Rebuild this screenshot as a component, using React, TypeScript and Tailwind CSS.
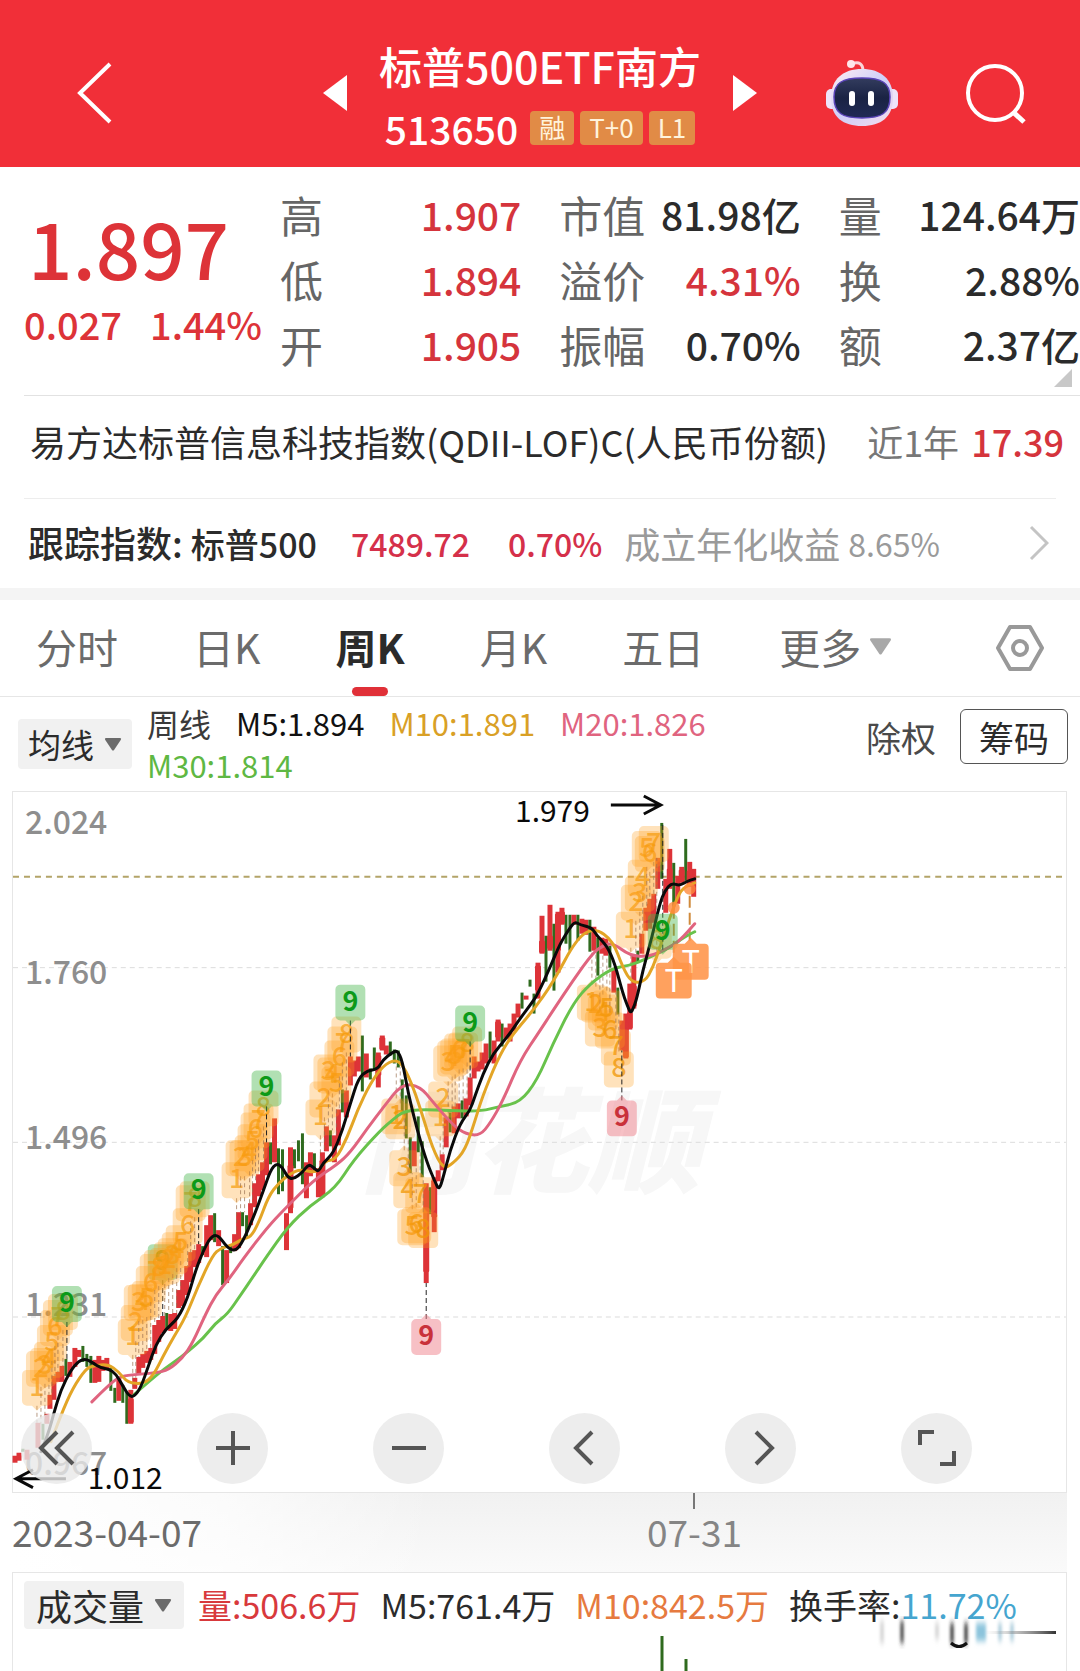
import type { ReactNode } from 'react'

type Candle = [x: number, top: number, bottom: number, color: 'r' | 'g']
type Mark = [x: number, y: number, label: number]

const RED = '#dd3338'
const GREEN = '#2f6b1e'

const quotes = [
	[
		{ label: '高', value: '1.907', up: true },
		{ label: '低', value: '1.894', up: true },
		{ label: '开', value: '1.905', up: true },
	],
	[
		{ label: '市值', value: '81.98亿', up: false },
		{ label: '溢价', value: '4.31%', up: true },
		{ label: '振幅', value: '0.70%', up: false },
	],
	[
		{ label: '量', value: '124.64万', up: false },
		{ label: '换', value: '2.88%', up: false },
		{ label: '额', value: '2.37亿', up: false },
	],
]

const tabs = ['分时', '日K', '周K', '月K', '五日']

const gridLines = [
	{ label: '2.024', textY: 833, lineY: 0 },
	{ label: '1.760', textY: 983, lineY: 967 },
	{ label: '1.496', textY: 1149, lineY: 1142 },
	{ label: '1.231', textY: 1316, lineY: 1317 },
	{ label: '0.967', textY: 1475, lineY: 0 },
]

const candles: Candle[] = [
	[14, 1456, 1463, 'r'], [18, 1453, 1461, 'r'], [22, 1449, 1452, 'g'], [26, 1450, 1460, 'r'], [37, 1423, 1448, 'r'],
	[42, 1424, 1440, 'g'], [46, 1414, 1424, 'r'], [49, 1395, 1409, 'r'], [53, 1376, 1400, 'r'], [57, 1372, 1382, 'r'],
	[61, 1366, 1382, 'r'], [65, 1359, 1376, 'g'], [69, 1362, 1377, 'r'], [74, 1348, 1367, 'r'], [78, 1350, 1357, 'r'],
	[82, 1346, 1362, 'g'], [86, 1354, 1367, 'g'], [90, 1356, 1383, 'g'], [94, 1360, 1383, 'r'], [98, 1356, 1382, 'r'],
	[102, 1360, 1371, 'r'], [106, 1358, 1370, 'r'], [110, 1368, 1391, 'g'], [114, 1388, 1403, 'g'], [118, 1378, 1401, 'r'],
	[122, 1385, 1403, 'g'], [126, 1392, 1424, 'g'], [130, 1390, 1424, 'r'], [134, 1378, 1389, 'r'], [138, 1357, 1375, 'r'],
	[142, 1354, 1368, 'r'], [146, 1351, 1363, 'r'], [150, 1348, 1360, 'r'], [154, 1325, 1354, 'r'], [158, 1320, 1342, 'r'],
	[162, 1316, 1333, 'r'], [166, 1313, 1330, 'g'], [170, 1314, 1331, 'r'], [174, 1313, 1329, 'r'], [178, 1290, 1308, 'r'],
	[182, 1280, 1306, 'r'], [186, 1266, 1295, 'r'], [190, 1252, 1282, 'r'], [194, 1250, 1267, 'r'], [198, 1244, 1263, 'r'],
	[202, 1246, 1255, 'g'], [206, 1225, 1257, 'r'], [210, 1215, 1240, 'r'], [214, 1213, 1242, 'g'], [218, 1230, 1246, 'r'],
	[222, 1246, 1285, 'g'], [226, 1250, 1283, 'r'], [230, 1244, 1253, 'g'], [234, 1234, 1251, 'r'], [238, 1212, 1248, 'r'],
	[242, 1212, 1226, 'g'], [246, 1215, 1236, 'g'], [250, 1203, 1225, 'r'], [254, 1183, 1207, 'r'], [258, 1174, 1196, 'r'],
	[262, 1162, 1190, 'r'], [266, 1142, 1175, 'r'], [270, 1142, 1164, 'g'], [274, 1118, 1162, 'r'], [278, 1148, 1194, 'g'],
	[282, 1149, 1191, 'g'], [286, 1213, 1250, 'r'], [290, 1147, 1213, 'r'], [294, 1149, 1168, 'g'], [298, 1140, 1161, 'g'],
	[302, 1133, 1184, 'g'], [306, 1162, 1198, 'r'], [310, 1152, 1176, 'r'], [314, 1153, 1172, 'g'], [318, 1168, 1197, 'r'],
	[322, 1152, 1197, 'r'], [326, 1126, 1151, 'r'], [330, 1130, 1146, 'g'], [334, 1135, 1162, 'r'], [338, 1109, 1145, 'r'],
	[342, 1089, 1112, 'g'], [346, 1090, 1117, 'r'], [350, 1056, 1085, 'r'], [354, 1060, 1076, 'r'], [358, 1056, 1071, 'r'],
	[362, 1035, 1091, 'g'], [366, 1053, 1077, 'r'], [370, 1068, 1079, 'g'], [374, 1047, 1070, 'g'], [378, 1052, 1087, 'r'],
	[382, 1035, 1050, 'r'], [386, 1045, 1054, 'r'], [390, 1041, 1055, 'g'], [394, 1049, 1063, 'g'], [398, 1050, 1067, 'g'],
	[402, 1079, 1111, 'g'], [406, 1095, 1138, 'g'], [410, 1137, 1173, 'g'], [414, 1141, 1166, 'r'], [418, 1116, 1152, 'g'],
	[422, 1141, 1177, 'g'], [426, 1183, 1283, 'r'], [430, 1187, 1214, 'g'], [434, 1177, 1232, 'r'], [438, 1170, 1181, 'r'],
	[442, 1154, 1170, 'r'], [446, 1117, 1147, 'r'], [450, 1112, 1132, 'g'], [454, 1106, 1133, 'r'], [458, 1103, 1118, 'r'],
	[462, 1100, 1118, 'g'], [466, 1098, 1116, 'r'], [470, 1077, 1105, 'r'], [474, 1056, 1078, 'r'], [478, 1061, 1071, 'r'],
	[482, 1052, 1069, 'r'], [486, 1043, 1063, 'r'], [490, 1031, 1058, 'g'], [494, 1040, 1063, 'r'], [498, 1019, 1041, 'r'],
	[502, 1023, 1046, 'g'], [506, 1027, 1038, 'r'], [510, 1023, 1041, 'r'], [514, 1013, 1031, 'r'], [518, 1003, 1017, 'r'],
	[522, 992, 1008, 'g'], [526, 995, 999, 'r'], [530, 979, 986, 'g'], [534, 993, 1013, 'g'], [538, 962, 998, 'r'],
	[542, 915, 953, 'r'], [546, 935, 981, 'g'], [550, 904, 950, 'r'], [554, 923, 990, 'g'], [558, 911, 972, 'r'],
	[562, 907, 924, 'r'], [566, 914, 943, 'g'], [570, 914, 950, 'g'], [574, 914, 924, 'r'], [578, 914, 940, 'g'],
	[582, 918, 933, 'r'], [586, 919, 934, 'r'], [590, 919, 951, 'g'], [594, 926, 950, 'r'], [598, 937, 975, 'g'],
	[602, 937, 953, 'r'], [606, 938, 955, 'r'], [610, 945, 967, 'g'], [614, 969, 992, 'r'], [618, 987, 1014, 'g'],
	[622, 1020, 1050, 'r'], [626, 1013, 1058, 'r'], [630, 983, 1029, 'r'], [634, 955, 1008, 'r'], [638, 950, 962, 'g'],
	[642, 933, 953, 'r'], [646, 907, 930, 'r'], [650, 898, 928, 'r'], [654, 893, 922, 'r'], [658, 857, 888, 'r'],
	[662, 822, 878, 'g'], [666, 878, 912, 'r'], [670, 848, 888, 'r'], [674, 862, 906, 'g'], [678, 875, 903, 'r'],
	[682, 866, 882, 'r'], [686, 838, 880, 'g'], [690, 861, 886, 'r'], [694, 868, 896, 'r'],
]

// candles whose body is wider than the wick
const bodies: Candle[] = [
	[426, 1190, 1272, 'r'], [434, 1180, 1217, 'r'], [498, 1021, 1037, 'r'], [542, 940, 952, 'r'], [550, 935, 948, 'r'],
	[558, 913, 950, 'r'], [562, 911, 923, 'r'], [538, 965, 990, 'r'], [630, 1012, 1028, 'r'], [634, 985, 1006, 'r'],
	[626, 1022, 1057, 'r'], [650, 903, 922, 'r'], [670, 868, 886, 'r'], [682, 869, 881, 'r'], [690, 870, 884, 'r'],
	[290, 1165, 1208, 'r'], [322, 1160, 1195, 'r'], [382, 1037, 1049, 'r'], [378, 1055, 1075, 'r'], [130, 1399, 1423, 'r'],
]

const upMarks: Mark[] = [
	[36, 1388, 1], [40, 1369, 2], [44, 1366, 3], [48, 1360, 4], [51, 1343, 5], [54, 1328, 6], [57, 1318, 7], [62, 1312, 8],
	[132, 1337, 1], [135, 1323, 2], [138, 1303, 3], [142, 1302, 4], [146, 1299, 5], [150, 1284, 6], [154, 1272, 7], [158, 1268, 8],
	[164, 1266, 1], [168, 1260, 2], [172, 1256, 3], [176, 1250, 4], [180, 1243, 5], [187, 1226, 6], [190, 1203, 7], [194, 1199, 8],
	[236, 1180, 1], [240, 1158, 2], [244, 1158, 3], [249, 1153, 4], [252, 1142, 5], [255, 1130, 6], [258, 1121, 7], [263, 1108, 8],
	[320, 1117, 1], [324, 1099, 2], [328, 1072, 3], [332, 1075, 4], [336, 1084, 5], [339, 1058, 6], [342, 1044, 7], [346, 1034, 8],
	[440, 1118, 1], [443, 1099, 2], [448, 1063, 3], [452, 1058, 4], [455, 1056, 5], [459, 1051, 6], [463, 1050, 7], [467, 1044, 8],
	[631, 929, 1], [636, 902, 2], [640, 893, 3], [643, 877, 4], [647, 848, 5], [650, 853, 6], [654, 843, 7], [657, 940, 8],
]

const downMarks: Mark[] = [
	[396, 1116, 1], [400, 1121, 2], [404, 1168, 3], [408, 1190, 4], [412, 1227, 5], [416, 1225, 6], [420, 1195, 7], [423, 1230, 8],
	[592, 1002, 1], [596, 1004, 2], [600, 1028, 3], [603, 1012, 4], [607, 1008, 5], [610, 1030, 6], [616, 1047, 7], [619, 1069, 8],
]

const tops: Mark[] = [
	[66, 1304, 9], [198, 1191, 9], [266, 1088, 9], [350, 1002, 9], [470, 1023, 9], [663, 931, 9],
]
const buriedTops: Mark[] = [[162, 1262, 9]]
const bottoms: Mark[] = [[426, 1337, 9], [622, 1118, 9]]

const averages = [
	{
		color: '#68c24b',
		points:
			'133,1395 158,1373 175,1361 187,1352 203,1338 215,1323 227,1314 240,1295 253,1276 265,1258 287,1227 310,1205 335,1188 353,1160 380,1130 393,1119 403,1111 420,1109 450,1110 480,1111 500,1106 520,1102 537,1080 553,1043 573,1003 590,983 613,967 630,965 647,958 670,947 685,936 695,931',
	},
	{
		color: '#e0647f',
		points:
			'91,1402 105,1388 118,1377 130,1375 155,1373 168,1370 182,1358 192,1343 205,1314 215,1295 230,1277 243,1258 267,1227 283,1210 313,1180 337,1164 350,1152 367,1128 383,1107 402,1083 420,1086 433,1102 453,1125 466,1134 480,1135 490,1123 503,1100 520,1060 540,1030 553,1010 573,980 593,952 603,945 613,942 630,955 650,956 667,948 680,940 695,923',
	},
	{
		color: '#e3a526',
		points:
			'50,1442 60,1415 72,1388 85,1369 92,1366 107,1364 118,1372 127,1383 143,1384 153,1375 163,1355 173,1337 185,1317 197,1287 212,1255 220,1248 232,1245 243,1238 250,1237 258,1223 268,1196 278,1183 290,1173 300,1169 317,1173 325,1160 335,1160 347,1137 357,1110 370,1083 383,1065 395,1059 403,1065 413,1087 423,1117 432,1147 443,1169 453,1163 465,1150 475,1120 482,1097 497,1060 510,1037 533,1010 553,982 577,937 595,927 613,940 623,967 632,982 645,981 653,967 660,947 668,923 677,898 683,887 695,882',
	},
	{
		color: '#0a0a0a',
		points:
			'40,1452 47,1435 53,1413 60,1390 70,1370 78,1361 85,1359 92,1363 100,1368 108,1369 115,1374 122,1386 128,1396 133,1397 140,1388 148,1365 155,1345 165,1329 177,1319 187,1298 195,1270 203,1250 210,1237 217,1234 227,1248 235,1251 242,1242 253,1217 263,1190 270,1170 276,1163 282,1167 287,1177 293,1179 302,1172 308,1164 313,1167 318,1172 323,1162 333,1153 342,1130 350,1103 358,1078 367,1070 377,1069 383,1059 392,1052 397,1050 402,1060 408,1093 417,1130 427,1163 435,1182 439,1190 443,1177 450,1150 460,1123 470,1110 474,1098 483,1073 493,1053 507,1037 520,1018 532,1002 538,993 550,967 560,943 570,927 575,921 580,924 592,927 597,935 607,945 615,963 623,993 629,1009 631,1012 633,1009 637,998 643,970 652,937 660,903 665,890 672,882 680,885 688,880 695,878',
	},
]

// rounds the corners by curving through the midpoint of each segment
const smooth = (points: string) => {
	const p = points.split(' ').map((pair) => pair.split(',').map(Number))
	const last = p[p.length - 1]
	const curves = p
		.slice(1, -1)
		.map(([x, y], i) => `Q${x} ${y} ${(x + p[i + 2][0]) / 2} ${(y + p[i + 2][1]) / 2}`)
	return `M${p[0][0]} ${p[0][1]}${curves.join('')}L${last[0]} ${last[1]}`
}

// y at which a mark's tether meets its candle
const anchor = (x: number, side: 1 | 2) =>
	candles.reduce((a, b) => (Math.abs(b[0] - x) < Math.abs(a[0] - x) ? b : a))[side]

const flagPath = (x: number, y: number, down?: boolean) =>
	down
		? `M${x - 10} ${y - 18}h5l5 -5l5 5h5a5 5 0 0 1 5 5v26a5 5 0 0 1 -5 5h-20a5 5 0 0 1 -5 -5v-26a5 5 0 0 1 5 -5z`
		: `M${x - 10} ${y - 18}h20a5 5 0 0 1 5 5v26a5 5 0 0 1 -5 5h-5l-5 5l-5 -5h-5a5 5 0 0 1 -5 -5v-26a5 5 0 0 1 5 -5z`

const Marks = ({ marks, down, fill, ink, strong }: {
	marks: Mark[]
	down?: boolean
	fill: string
	ink: string
	strong?: boolean
}) => (
	<>
		{marks.map(([x, y, label]) => (
			<g key={`${x}-${y}`}>
				<line
					x1={x}
					x2={x}
					y1={down ? y - 18 : y + 18}
					y2={anchor(x, down ? 2 : 1)}
					stroke={strong ? '#222' : '#9a7050'}
					strokeOpacity={strong ? 1 : 0.7}
					strokeDasharray={strong ? '5 3' : '4 3'}
				/>
				<path d={flagPath(x, y, down)} fill={fill} />
				<text
					x={x}
					y={y + 8}
					textAnchor="middle"
					fontSize="27"
					fontWeight={strong ? 700 : 500}
					fill={ink}
				>
					{label}
				</text>
			</g>
		))}
	</>
)

const TradeFlag = ({ x, y }: { x: number; y: number }) => (
	<g>
		<path
			d={`M${x - 14} ${y - 18}h8l6 -6l6 6h8a4 4 0 0 1 4 4v28a4 4 0 0 1 -4 4h-28a4 4 0 0 1 -4 -4v-28a4 4 0 0 1 4 -4z`}
			fill="#ff9448"
			fillOpacity="0.88"
		/>
		<text x={x} y={y + 11} textAnchor="middle" fontSize="31" fill="#fff">T</text>
	</g>
)

const KLineChart = () => (
	<svg viewBox="12 791 1055 701" className="block w-full overflow-visible" role="img" aria-label="周K线">
		<text x="360" y="1184" fontSize="114" fontWeight="900" fontStyle="italic" fill="#f7f7f7">同花顺</text>
		{gridLines.map(({ label, textY, lineY }) => (
			<g key={label}>
				{lineY > 0 && <line x1="12" x2="1067" y1={lineY} y2={lineY} stroke="#dcdcdc" strokeDasharray="5 4" />}
				<text x="24" y={textY} fontSize="32" fontWeight="500" fill="#8e8e8e">{label}</text>
			</g>
		))}
		<line x1="12" x2="1067" y1="876" y2="876" stroke="#b3a468" strokeWidth="2" strokeDasharray="6 5" />
		<path d="M674 906V955M690 895V940" stroke="#d08a3c" strokeWidth="2" strokeDasharray="12 5" />
		{candles.map(([x, top, bottom, color]) => (
			<line key={x} x1={x} x2={x} y1={top} y2={bottom} stroke={color === 'r' ? RED : GREEN} strokeWidth={color === 'r' ? 5 : 3} />
		))}
		{bodies.map(([x, top, bottom]) => (
			<rect key={x} x={x - 3} y={top} width="6" height={bottom - top} rx="1" fill={RED} />
		))}
		<Marks marks={buriedTops} strong fill="rgba(70,180,75,0.42)" ink="#4f9a10" />
		<Marks marks={upMarks} fill="rgba(255,160,30,0.3)" ink="rgba(245,155,10,0.7)" />
		<Marks marks={downMarks} down fill="rgba(255,160,30,0.3)" ink="rgba(240,150,5,0.75)" />
		{averages.map(({ color, points }) => (
			<path key={color} d={smooth(points)} fill="none" stroke={color} strokeWidth="3" strokeLinecap="round" />
		))}
		<Marks marks={tops} strong fill="rgba(70,180,75,0.42)" ink="#0c9a18" />
		<Marks marks={bottoms} down strong fill="rgba(240,130,140,0.5)" ink="#c9313a" />
		<TradeFlag x={691} y={961} />
		<TradeFlag x={674} y={980} />
		<circle cx="674" cy="907" r="6" fill="#ff8a3c" fillOpacity="0.8" />
		<circle cx="690" cy="888" r="6" fill="#ff8a3c" fillOpacity="0.8" />
		<g fontSize="30" fill="#0a0a0a">
			<text x="515" y="821">1.979</text>
			<text x="87" y="1489">1.012</text>
		</g>
		<path d="M611 804H661M644 795L661 804L644 813M65 1479H15M32 1470L15 1479L32 1488" fill="none" stroke="#0a0a0a" strokeWidth="3" />
	</svg>
)

const Robot = () => (
	<svg viewBox="0 0 74 68" className="h-[68px] w-[74px]" aria-hidden="true">
		<defs>
			<linearGradient id="shell" x1="0" y1="0" x2="1" y2="1">
				<stop offset="0" stopColor="#ffeef2" />
				<stop offset="0.5" stopColor="#cfcff8" />
				<stop offset="1" stopColor="#f6dcec" />
			</linearGradient>
			<linearGradient id="visor" x1="0" y1="0" x2="0" y2="1">
				<stop offset="0" stopColor="#333c5e" />
				<stop offset="0.5" stopColor="#1a2344" />
				<stop offset="1" stopColor="#202a55" />
			</linearGradient>
		</defs>
		<path d="M27 5C34 2 38 5 38 12" fill="none" stroke="#fbd5da" strokeWidth="3" />
		<circle cx="26" cy="5" r="4" fill="#ffe6ea" />
		<rect x="1" y="30" width="12" height="20" rx="5" fill="#eee4fa" />
		<rect x="61" y="30" width="12" height="20" rx="5" fill="#eee4fa" />
		<path d="M37 10C56 10 68 20 68 39C68 58 56 67 37 67C18 67 6 58 6 39C6 20 18 10 37 10Z" fill="url(#shell)" />
		<path d="M37 19C57 19 65 24 65 38C65 54 57 59 37 59C17 59 9 54 9 38C9 24 17 19 37 19Z" fill="url(#visor)" stroke="#5a44b8" strokeWidth="1.5" />
		<rect x="24" y="32" width="6" height="15" rx="3" fill="#fff" />
		<rect x="43" y="32" width="6" height="15" rx="3" fill="#fff" />
	</svg>
)

const Triangle = ({ className }: { className: string }) => (
	<svg viewBox="0 0 20 16" className={className} aria-hidden="true">
		<path d="M2 1H18Q20 1 19 3L11 15Q10 16 9 15L1 3Q0 1 2 1Z" fill="currentColor" />
	</svg>
)

const Tag = ({ children }: { children: ReactNode }) => (
	<span className="flex h-[34px] items-center rounded-sm bg-[#e18b46] px-[9px] pb-[2px] text-[26px] leading-none text-[#fff3dc]">{children}</span>
)

const Header = () => (
	<header className="grid h-[167px] grid-cols-[1fr_auto_1fr] items-center bg-[#f12f38] pt-[18px] text-white">
		<button type="button" aria-label="返回" className="ml-[76px] w-9">
			<svg viewBox="0 0 36 64" className="h-16 w-9" fill="none" stroke="currentColor" strokeWidth="4">
				<path d="M34 3L4 32L34 61" />
			</svg>
		</button>
		<div className="flex items-center gap-8">
			<button type="button" aria-label="上一只">
				<svg viewBox="0 0 24 36" className="h-9 w-6" fill="currentColor"><path d="M24 0V36L0 18Z" /></svg>
			</button>
			<div className="flex flex-col items-center gap-[11px] pt-2">
				<h1 className="text-[43px] leading-[52px] font-medium">标普500ETF南方</h1>
				<div className="flex items-center gap-[6px]">
					<span className="mr-[6px] text-[39px] leading-[52px] font-medium">513650</span>
					<Tag>融</Tag>
					<Tag>T+0</Tag>
					<Tag>L1</Tag>
				</div>
			</div>
			<button type="button" aria-label="下一只">
				<svg viewBox="0 0 24 36" className="h-9 w-6" fill="currentColor"><path d="M0 0V36L24 18Z" /></svg>
			</button>
		</div>
		<div className="flex items-center justify-end gap-[66px] pr-[53px]">
			<button type="button" aria-label="智能助手"><Robot /></button>
			<button type="button" aria-label="搜索" className="pt-[3px]">
				<svg viewBox="0 0 62 62" className="size-[62px]" fill="none" stroke="currentColor" strokeWidth="4">
					<circle cx="30" cy="30" r="27" />
					<path d="M48 49L59 59" strokeWidth="5" />
				</svg>
			</button>
		</div>
	</header>
)

const Quote = () => (
	<section className="relative ml-6 flex h-[229px] border-b border-[#e2e2e2] pt-[15px]">
		<div className="w-[256px] shrink-0 pt-[18px] text-[#dd3338]">
			<p className="pl-1 text-[78px] leading-[92px] font-medium">1.897</p>
			<p className="flex gap-7 text-[38px] leading-[64px] font-medium whitespace-nowrap">
				<span>0.027</span>
				<span>1.44%</span>
			</p>
		</div>
		<div className="grid flex-1 grid-cols-3 gap-x-[38px]">
			{quotes.map((column) => (
				<dl key={column[0].label}>
					{column.map(({ label, value, up }) => (
						<div key={label} className="flex h-[65px] items-center justify-between whitespace-nowrap">
							<dt className="text-[43px] leading-none text-[#666]">{label}</dt>
							<dd className={up ? 'text-[39px] leading-none font-medium text-[#d5343c]' : 'text-[39px] leading-none font-medium text-[#2b2b2b]'}>
								{value}
							</dd>
						</div>
					))}
				</dl>
			))}
		</div>
		<svg viewBox="0 0 18 18" className="absolute right-2 bottom-2 size-[18px]" aria-hidden="true">
			<path d="M18 0V18H0Z" fill="#c8c8c8" />
		</svg>
	</section>
)

const FundLinks = () => (
	<section className="border-b-[12px] border-[#f4f4f4]">
		<a href="#fund" className="mr-6 ml-6 flex h-[103px] items-center border-b border-[#ededed] pb-3 pl-[6px] text-[36px] leading-none whitespace-nowrap text-[#2b2b2b]">
			易方达标普信息科技指数(QDII-LOF)C(人民币份额)
			<span className="-mr-2 ml-auto text-[#777]">近1年 <span className="ml-1 font-medium text-[#d5343c]">17.39</span></span>
		</a>
		<a href="#index" className="flex h-[89px] items-center pr-[31px] pb-[2px] pl-7 text-[36px] leading-none whitespace-nowrap text-[#9a9a9a]">
			<span className="font-medium text-[#2b2b2b]">跟踪指数: <span className="text-[34px]">标普500</span></span>
			<span className="ml-[34px] text-[32px] font-medium text-[#d5304a]">7489.72</span>
			<span className="mr-[22px] ml-[38px] text-[32px] font-medium text-[#d5304a]">0.70%</span>
			成立年化收益
			<span className="ml-2 text-[32px]">8.65%</span>
			<svg viewBox="0 0 20 36" className="ml-auto h-9 w-5" fill="none" stroke="#c4c4c4" strokeWidth="3">
				<path d="M2 2L18 18L2 34" />
			</svg>
		</a>
	</section>
)

const Tabs = () => (
	<nav className="flex h-[97px] items-center gap-[75px] border-b border-[#e6e6e6] pr-9 pl-9 text-[41px] leading-none whitespace-nowrap text-[#6b6b6b]">
		{tabs.map((tab) =>
			tab === '周K' ? (
				<button key={tab} type="button" aria-current="page" className="relative flex h-full items-center pb-1 font-bold text-[#2b2b2b]">
					{tab}
					<span className="absolute bottom-0 left-1/2 h-[9px] w-9 -translate-x-1/2 rounded-full bg-[#e03038]" />
				</button>
			) : (
				<button key={tab} type="button" className="pb-1">{tab}</button>
			),
		)}
		<button type="button" className="flex items-center gap-2 pb-1">
			更多
			<Triangle className="h-[18px] w-[23px] text-[#a8a8a8]" />
		</button>
		<button type="button" aria-label="设置" className="ml-auto">
			<svg viewBox="0 0 48 48" className="size-12" fill="none" stroke="#999" strokeWidth="4" strokeLinejoin="round">
				<path d="M14 3H34L46 24L34 45H14L2 24Z" />
				<circle cx="24" cy="24" r="7" />
			</svg>
		</button>
	</nav>
)

const Averages = () => (
	<div className="flex h-[94px] items-center gap-[15px] pr-3 pl-[18px]">
		<button type="button" className="flex h-[50px] items-center gap-[10px] rounded bg-[#f1f1f1] px-[10px] text-[33px] leading-none whitespace-nowrap text-[#2b2b2b]">
			均线
			<Triangle className="h-[14px] w-[18px] text-[#6b6b6b]" />
		</button>
		<div className="flex flex-1 flex-wrap gap-x-[25px] text-[31px] leading-[42px]">
			<span className="text-[32px] text-[#3a3a3a]">周线</span>
			<span className="text-[#111]">M5:1.894</span>
			<span className="text-[#d9a026]">M10:1.891</span>
			<span className="text-[#e0647f]">M20:1.826</span>
			<span className="basis-full text-[#5fb843]">M30:1.814</span>
		</div>
		<div className="mb-4 flex gap-6 text-[35px] leading-none whitespace-nowrap">
			<button type="button" className="text-[#4a4a4a]">除权</button>
			<button type="button" className="h-[55px] rounded-md border border-[#555] px-[18px] text-[#2b2b2b]">筹码</button>
		</div>
	</div>
)

const tools = [
	{ label: '最早', path: 'M20 4L4 20L20 36M36 4L20 20L36 36' },
	{ label: '放大', path: 'M20 3V37M3 20H37' },
	{ label: '缩小', path: 'M3 20H37' },
	{ label: '向左', path: 'M27 4L11 20L27 36' },
	{ label: '向右', path: 'M15 4L31 20L15 36' },
	{ label: '全屏', path: 'M3 17V4H17M37 23V36H23' },
]

const Toolbar = () => (
	<div className="absolute bottom-2 left-2 flex gap-[105px]">
		{tools.map(({ label, path }) => (
			<button
				key={label}
				type="button"
				aria-label={label}
				className="flex size-[71px] items-center justify-center rounded-full bg-[#e9e9e9]/80 text-[#555]"
			>
				<svg viewBox="0 0 40 40" className="size-10" fill="none" stroke="currentColor" strokeWidth="4">
					<path d={path} />
				</svg>
			</button>
		))}
	</div>
)

const DateAxis = () => (
	<div className="relative h-[79px] bg-linear-to-b from-[#f1f1f1] to-[#fafafa] text-[37px] leading-none text-[#6b6b6b]">
		<div className="absolute inset-y-0 left-0 w-2/5 bg-linear-to-r from-white via-white/70 to-transparent" />
		<div className="relative flex items-start">
			<span className="w-3/5 pt-5">2023-04-07</span>
			<span className="flex flex-col items-center gap-1 pl-[2px] text-[#858585]">
				<i className="h-4 w-[2px] bg-[#777]" />
				07-31
			</span>
		</div>
	</div>
)

const Volume = () => (
	<section className="relative h-[99px] overflow-hidden border border-b-0 border-[#e6e6e6]">
		<div className="flex items-center gap-5 pt-2 pl-[11px] text-[34px] leading-none whitespace-nowrap">
			<button type="button" className="-mr-[6px] flex h-12 items-center gap-[10px] rounded bg-[#f1f1f1] px-3 text-[36px] leading-none text-[#2b2b2b]">
				成交量
				<Triangle className="h-[14px] w-[18px] text-[#6b6b6b]" />
			</button>
			<span className="text-[#d8393c]">量:506.6万</span>
			<span className="text-[#2b2b2b]">M5:761.4万</span>
			<span className="text-[#e67a40]">M10:842.5万</span>
			<span className="text-[#2b2b2b]">换手率:<span className="text-[#45a5cf]">11.72%</span></span>
		</div>
		<svg viewBox="13 1574 1053 98" className="absolute inset-x-0 top-0 w-full" aria-hidden="true">
			<defs>
				<filter id="soft" x="-20%" y="-20%" width="140%" height="140%">
					<feGaussianBlur stdDeviation="1.5 3" />
				</filter>
				<linearGradient id="streak" x1="0" x2="1">
					<stop offset="0" stopColor="#999" stopOpacity="0" />
					<stop offset="1" stopColor="#333" />
				</linearGradient>
			</defs>
			<path d="M662 1637V1672M686 1660V1672" stroke={GREEN} strokeWidth="3" />
			<rect x="881" y="1624" width="174" height="22" fill="#fff" fillOpacity="0.7" />
			<g filter="url(#soft)" fill="none" strokeWidth="3">
				<path d="M882 1622V1644M937 1624V1640" stroke="#ccc" />
				<path d="M902 1622V1644" stroke="#333" />
				<path d="M952 1624V1645M966 1624V1645" stroke="#222" />
				<path d="M981 1624V1642" stroke="#8cc4dc" strokeWidth="10" />
				<path d="M1000 1624V1642M1012 1624V1642" stroke="#9fc4d6" />
			</g>
			<path d="M951 1644Q959 1651 967 1644" fill="none" stroke="#111" strokeWidth="3" />
			<rect x="985" y="1632" width="71" height="3" fill="url(#streak)" />
		</svg>
	</section>
)

export default function App() {
	return (
		<div className="overflow-hidden bg-white font-['Noto_Sans_CJK_SC','Noto_Sans',sans-serif]">
			<Header />
			<Quote />
			<FundLinks />
			<Tabs />
			<Averages />
			<main className="mr-[13px] ml-3">
				<div className="relative border border-[#e6e6e6]">
					<KLineChart />
					<Toolbar />
				</div>
				<DateAxis />
				<Volume />
			</main>
		</div>
	)
}
